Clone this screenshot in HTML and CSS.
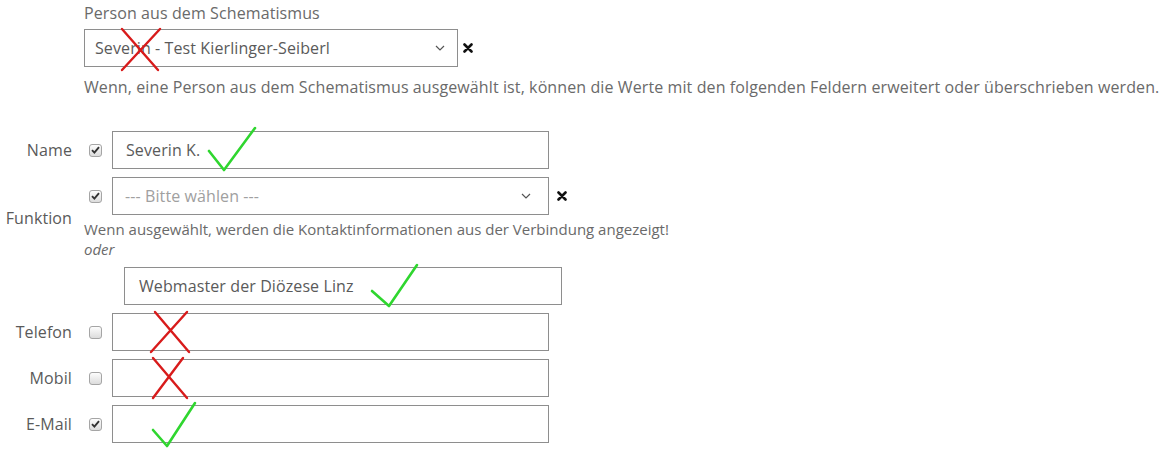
FILE: index.html
```html
<!DOCTYPE html>
<html lang="de">
<head>
<meta charset="utf-8">
<title>Ansprechpartner</title>
<link rel="stylesheet" href="styles.css">
</head>
<body>
<div class="page">
  <div class="top">
    <div class="top-label">Person aus dem Schematismus</div>
    <div class="select-row">
      <div class="select">
        <span class="select-text">Severin - Test Kierlinger-Seiberl</span>
        <svg class="chev" width="10" height="6" viewBox="0 0 10 6"><polyline points="1,1 5,5 9,1" fill="none" stroke="#555" stroke-width="1.2"/></svg>
      </div>
      <svg class="clear" width="10" height="10" viewBox="0 0 10 10"><path d="M1.5 1.5 L8.5 8.5 M8.5 1.5 L1.5 8.5" stroke="#111" stroke-width="2.6" stroke-linecap="round"/></svg>
    </div>
    <div class="help">Wenn, eine Person aus dem Schematismus ausgewählt ist, können die Werte mit den folgenden Feldern erweitert oder überschrieben werden.</div>
  </div>

  <div class="form">
    <div class="row">
      <div class="label">Name</div>
      <span class="cb"><svg width="9" height="8" viewBox="0 0 9 8"><path d="M1 4.2 L3.4 6.6 L8 1.2" fill="none" stroke="#333" stroke-width="1.9"/></svg></span>
      <div class="field">Severin K.</div>
    </div>

    <div class="row">
      <div class="label">Funktion</div>
      <div class="group">
        <div class="line">
          <span class="cb"><svg width="9" height="8" viewBox="0 0 9 8"><path d="M1 4.2 L3.4 6.6 L8 1.2" fill="none" stroke="#333" stroke-width="1.9"/></svg></span>
          <div class="field select-field">
            <span class="placeholder">--- Bitte wählen ---</span>
            <svg class="chev" width="10" height="6" viewBox="0 0 10 6"><polyline points="1,1 5,5 9,1" fill="none" stroke="#555" stroke-width="1.2"/></svg>
          </div>
          <svg class="clear" width="10" height="10" viewBox="0 0 10 10"><path d="M1.5 1.5 L8.5 8.5 M8.5 1.5 L1.5 8.5" stroke="#111" stroke-width="2.6" stroke-linecap="round"/></svg>
        </div>
        <div class="subhelp">Wenn ausgewählt, werden die Kontaktinformationen aus der Verbindung angezeigt!</div>
        <div class="oder">oder</div>
      </div>
    </div>

    <div class="row">
      <div class="field wide">Webmaster der Diözese Linz</div>
    </div>

    <div class="row">
      <div class="label">Telefon</div>
      <span class="cb"></span>
      <div class="field"></div>
    </div>

    <div class="row">
      <div class="label">Mobil</div>
      <span class="cb"></span>
      <div class="field"></div>
    </div>

    <div class="row">
      <div class="label">E-Mail</div>
      <span class="cb"><svg width="9" height="8" viewBox="0 0 9 8"><path d="M1 4.2 L3.4 6.6 L8 1.2" fill="none" stroke="#333" stroke-width="1.9"/></svg></span>
      <div class="field"></div>
    </div>
  </div>

  <svg class="marks" width="1165" height="452" viewBox="0 0 1165 452">
    <g stroke="#d81b1b" stroke-width="2.4" stroke-linecap="round" fill="none">
      <path d="M122 29 L158 70 M160 29 L122 70"/>
      <path d="M155 312 L189 352 M187 312 L151 352"/>
      <path d="M153 358 L187 398 M183 358 L153 398"/>
    </g>
    <g stroke="#2fd62f" stroke-width="2.6" stroke-linecap="round" stroke-linejoin="round" fill="none">
      <path d="M209 151 L224 170 L255 128"/>
      <path d="M372 291 L389 306 L417 265"/>
      <path d="M153 430 L167 446 L195 403"/>
    </g>
  </svg>
</div>
</body>
</html>
```
FILE: styles.css
```css
body {
  margin: 0;
  font-family: "Open Sans", "Liberation Sans", sans-serif;
  font-size: 16px;
  letter-spacing: 0.1px;
  color: #6a6a6a;
  background: #fff;
}

.page {
  position: relative;
  width: 1165px;
  height: 452px;
  overflow: hidden;
}

.top {
  padding: 3px 0 0 84px;
}

.top-label {
  line-height: 20px;
}

.select-row {
  display: flex;
  align-items: center;
  margin-top: 6px;
}

.select {
  box-sizing: border-box;
  width: 374px;
  height: 38px;
  border: 1px solid #8e8e8e;
  display: flex;
  align-items: center;
  justify-content: space-between;
  padding: 0 12px 0 10px;
  color: #5a5a5a;
}

.chev {
  display: block;
}

.clear {
  display: block;
  margin-left: 5px;
}

.help {
  line-height: 20px;
  margin-top: 10px;
  white-space: nowrap;
}

.form {
  margin-top: 34px;
  display: flex;
  flex-direction: column;
  gap: 8px;
}

.row {
  display: flex;
  align-items: center;
}

.label {
  box-sizing: border-box;
  width: 84px;
  padding-right: 12px;
  text-align: right;
  color: #5a5a5a;
}

.cb {
  box-sizing: border-box;
  width: 13px;
  height: 13px;
  margin-left: 5px;
  margin-right: 10px;
  border: 1px solid #a5a5a5;
  border-radius: 3px;
  background: linear-gradient(#fdfdfd, #dcdcdc);
  display: flex;
  align-items: center;
  justify-content: center;
}

.cb svg {
  display: block;
}

.field {
  box-sizing: border-box;
  width: 437px;
  height: 38px;
  border: 1px solid #8e8e8e;
  padding-left: 13px;
  display: flex;
  align-items: center;
  color: #5a5a5a;
}

.select-field {
  justify-content: space-between;
  padding: 0 17px 0 12px;
}

.placeholder {
  color: #a0a0a0;
}

.group {
  display: flex;
  flex-direction: column;
}

.line {
  display: flex;
  align-items: center;
}

.line .clear {
  margin-left: 8px;
}

.subhelp {
  font-size: 15px;
  letter-spacing: 0;
  line-height: 20px;
  margin-top: 4px;
  white-space: nowrap;
}

.oder {
  font-size: 15px;
  letter-spacing: 0;
  line-height: 20px;
  font-style: italic;
}

.wide {
  width: 438px;
  margin-left: 124px;
  padding-left: 14px;
}

.marks {
  position: absolute;
  top: 0;
  left: 0;
  pointer-events: none;
}
```
